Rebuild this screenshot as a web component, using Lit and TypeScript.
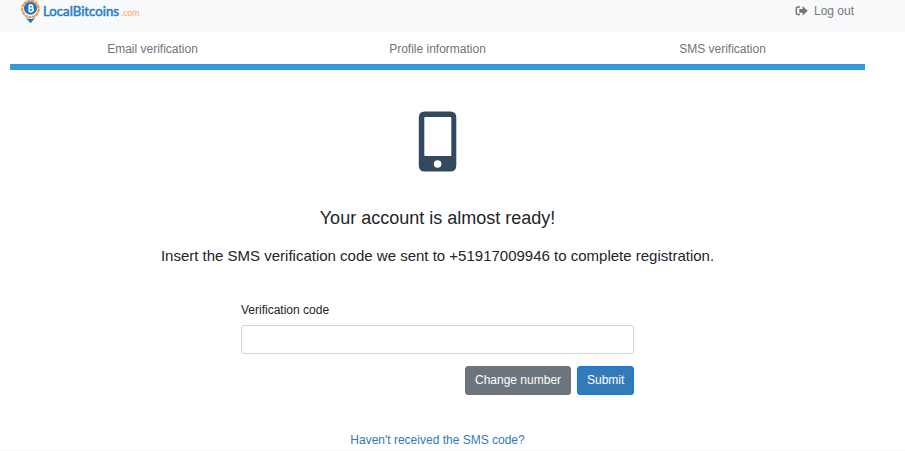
import { LitElement, html, css } from "lit";
import { customElement } from "lit/decorators.js";

@customElement("site-logo")
class SiteLogo extends LitElement {
  static styles = css`
    :host { display: block; width: 124px; height: 24px; }
    svg { display: block; }
    .name { font: 400 12.500px "Lato", "Liberation Sans", sans-serif; fill: #2a7fbd; stroke: #2a7fbd; stroke-width: .5px; }
    .tld { font: 400 9px "Lato", "Liberation Sans", sans-serif; fill: #f9a864; }
  `;
  render() {
    return html`<svg width="124" height="24" viewBox="20 0 124 24">
      <path d="M25.500 17.500Q30.500 20.500 35.500 17.500L30.500 23.200Z" fill="#1b78ba"/>
      <circle cx="30.500" cy="9" r="8.200" fill="#fff" stroke="#f7954a" stroke-width="2.200" stroke-dasharray="3.400 .5"/>
      <circle cx="30.500" cy="8.200" r="6.500" fill="#1b78ba"/>
      <g fill="none" stroke="#fff" stroke-width="1.500">
        <path d="M28.800 5.200h2.200q1.800 0 1.800 1.500t-1.800 1.500h-1.800M31 8.200q2.200 0 2.200 1.600t-2.200 1.600h-2.400M29.200 5.200v6.200"/>
        <path d="M30 3.800v1.300M31.800 4v1.200M30 11.500v1.300M31.700 11.400v1.200" stroke-width=".8"/>
      </g>
      <text class="name" x="43" y="16" textLength="76" lengthAdjust="spacingAndGlyphs">LocalBitcoins</text>
      <text class="tld" x="121" y="16" textLength="18.500" lengthAdjust="spacingAndGlyphs">.com</text>
    </svg>`;
  }
}

@customElement("app-root")
class AppRoot extends LitElement {
  static styles = css`
    :host {
      display: block; box-sizing: border-box; height: 451px; overflow: hidden;
      background: #fff; color: #212529; border-bottom: 1px solid #fafafa;
      font: 12px/18px "Liberation Sans", Arial, sans-serif;
    }
    .top {
      display: flex; justify-content: space-between; height: 32px; box-sizing: border-box;
      padding: 0 51px 0 20px; background: #f8f9fa;
    }
    .logout { display: flex; gap: 5px; color: #777; height: 18px; padding-top: 2px; }
    .logout svg { margin-top: 3px; }
    .page { width: 855px; margin-left: 10px; }
    .steps { display: grid; grid-template-columns: repeat(3, 1fr); text-align: center; color: #6c757d; padding-top: 8px; height: 24px; }
    .bar { height: 6px; background: #3498db; }
    .body { display: flex; flex-direction: column; align-items: center; }
    .phone { display: block; margin-top: 41px; }
    h1 { font-size: 18px; line-height: 22px; font-weight: 400; margin: 35px 0 0; }
    .lead { font-size: 15px; line-height: 22px; margin: 16px 0 0; }
    form { width: 393px; margin-top: 34px; }
    label { display: block; }
    input {
      display: block; box-sizing: border-box; width: 100%; height: 29px; margin: 6px 0 12px;
      border: 1px solid #ced4da; border-radius: 3px; background: #fff; padding: 4px 8px; font: inherit;
    }
    .actions { display: flex; justify-content: flex-end; gap: 6px; }
    button {
      box-sizing: border-box; height: 29px; padding: 0 9px 2px; margin: 0; white-space: nowrap;
      border: 1px solid #6c757d; border-radius: 3px; background: #6c757d; color: #fff; font: inherit;
    }
    .change { width: 106px; }
    .submit { width: 57px; background: #337ab7; border-color: #007bff; }
    a { color: #337ab7; text-decoration: none; margin-top: 36px; }
  `;
  render() {
    return html`
      <header class="top">
        <site-logo></site-logo>
        <div class="logout">
          <svg width="14" height="12" viewBox="0 0 14 12">
            <path d="M5 2H3Q1.300 2 1.300 3.500v4.500Q1.300 9.500 3 9.500h2" fill="none" stroke="#777" stroke-width="1.500"/>
            <path d="M4.300 3.900H7.600V1L12.800 5.800 7.600 10.600V7.700H4.300Z" fill="#777"/>
          </svg>
          <span>Log out</span>
        </div>
      </header>
      <main class="page">
        <div class="steps"><span>Email verification</span><span>Profile information</span><span>SMS verification</span></div>
        <div class="bar"></div>
        <section class="body">
          <svg class="phone" width="39" height="61" viewBox="-.3 0 39 61">
            <path fill="#34495e" fill-rule="evenodd" d="M6.500.5h25.500q6 0 6 6v48q0 6-6 6H6.500q-6 0-6-6v-48q0-6 6-6ZM7 6q-1 0-1 1v37q0 1 1 1h25q1 0 1-1V7q0-1-1-1ZM19.300 49.200a3.800 3.800 0 1 0 0 7.600 3.800 3.800 0 0 0 0-7.600Z"/>
          </svg>
          <h1>Your account is almost ready!</h1>
          <p class="lead">Insert the SMS verification code we sent to +51917009946 to complete registration.</p>
          <form>
            <label for="code">Verification code</label>
            <input id="code" type="text">
            <div class="actions">
              <button class="change" type="button">Change number</button>
              <button class="submit" type="button">Submit</button>
            </div>
          </form>
          <a>Haven't received the SMS code?</a>
        </section>
      </main>`;
  }
}
